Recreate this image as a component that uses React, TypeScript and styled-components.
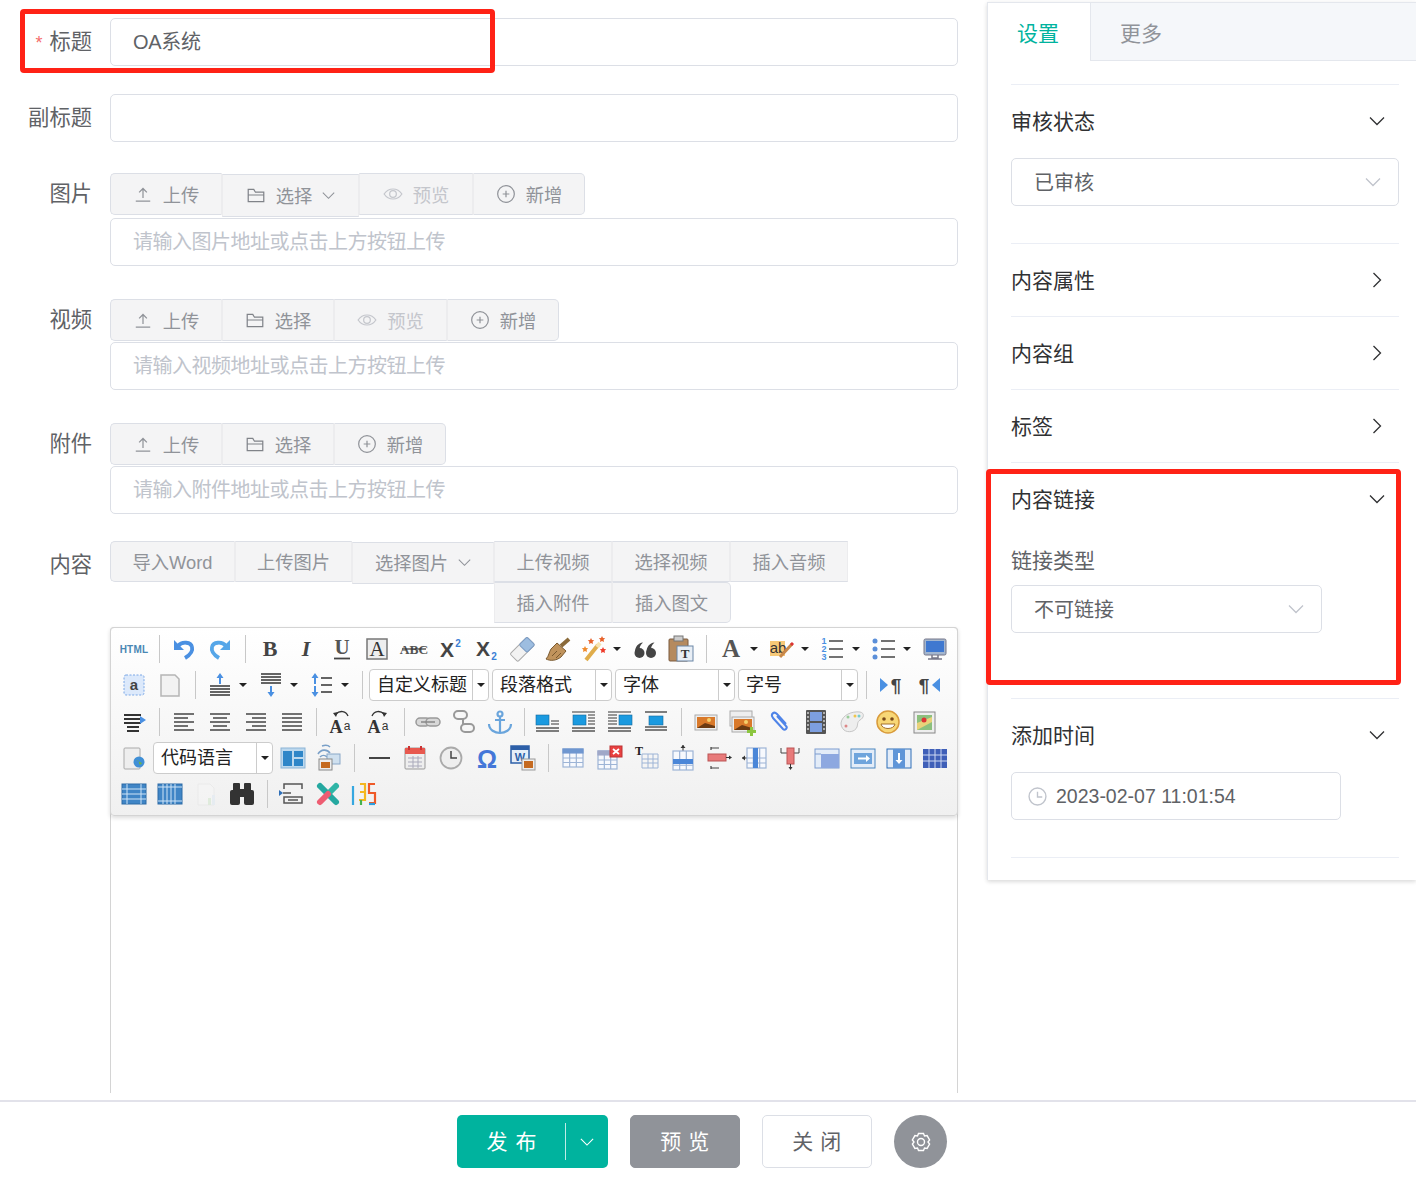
import React from "react";
import styled, { createGlobalStyle } from "styled-components";

const Global = createGlobalStyle`
  html, body { margin: 0; padding: 0; background: #fff; }
  * { box-sizing: border-box; }
  body { font-family: "Liberation Sans", "Noto Sans CJK SC", sans-serif; color: #606266; }
`;

const Page = styled.div`
  position: relative; width: 1416px; height: 1183px; overflow: hidden;
  display: grid; grid-template-rows: 1100px 83px;
`;
const Body = styled.div`display: flex; align-items: flex-start; height: 1100px;`;
const FormCol = styled.div`width: 987px; height: 1093px; overflow: hidden; padding: 18px 29px 0 0; flex: none;`;
const FormRow = styled.div<{ $mb: number }>`
  display: grid; grid-template-columns: 92px 848px; column-gap: 18px; margin-bottom: ${p => p.$mb}px; align-items: start;
`;
const Label = styled.label<{ $lh?: number }>`
  text-align: right; font-size: 21.3px; line-height: ${p => p.$lh ?? 48}px; height: ${p => p.$lh ?? 48}px; color: #606266; white-space: nowrap;
`;
const Star = styled.span`color: #f56c6c; font-size: 18px; line-height: 1; margin-right: 7px;`;
const Input = styled.div<{ $ph?: boolean }>`
  height: 48px; width: 100%; border: 1px solid #dcdfe6; border-radius: 5px; background: #fff;
  padding-left: 22px; font-size: 20px; line-height: 46px;
  color: ${p => (p.$ph ? "#c0c4cc" : "#606266")};
  letter-spacing: ${p => (p.$ph ? "-0.5px" : "-0.3px")};
`;
const BtnGroup = styled.div`display: flex; align-items: flex-start;`;
const Btn = styled.div<{ $w: number; $off?: number; $h?: number; $dim?: boolean; $first?: boolean; $last?: boolean }>`
  width: ${p => p.$w}px; height: ${p => p.$h ?? 42}px; margin-top: ${p => p.$off ?? 0}px;
  background: #f4f4f5; border: 1px solid #dcdfe6; border-left-color: ${p => (p.$first ? "#dcdfe6" : "#ececee")};
  border-right-color: ${p => (p.$last ? "#dcdfe6" : "#ececee")};
  border-radius: ${p => (p.$first ? "5px 0 0 5px" : p.$last ? "0 5px 5px 0" : "0")};
  display: flex; align-items: center; justify-content: center; gap: 10px; padding-bottom: 1px;
  font-size: 18.3px; color: ${p => (p.$dim ? "#c4c6cc" : "#909399")}; white-space: nowrap; flex: none;
`;
const TextBtn = styled(Btn)`gap: 10px; height: ${p => p.$h ?? 41}px; padding-bottom: 2px;`;
const Stack = styled.div`display: flex; flex-direction: column;`;
const Under = styled.div`margin-top: 1px;`;
const ContentBtns = styled.div`display: flex; align-items: flex-start; margin-bottom: 4px; height: 82px;`;
const WrapPart = styled.div`display: flex; flex-wrap: wrap; width: 354px;`;

const Editor = styled.div`
  width: 848px; height: 470px; border: 1px solid #d4d4d4; border-bottom: none; border-radius: 4px 4px 0 0; background: #fff;
`;
const Toolbar = styled.div`
  height: 189px; margin: -1px; padding: 3px 0 0 5px; border: 1px solid #d4d4d4; border-radius: 4px;
  background: linear-gradient(to bottom, #fff, #f0f0f0); box-shadow: 0 2px 4px rgba(0,0,0,.14);
  position: relative;
`;
const ToolRow = styled.div`display: flex; height: 36.25px; align-items: center;`;
const Cell = styled.div<{ $w?: number }>`
  width: ${p => p.$w ?? 36}px; height: 36px; flex: none; display: flex; align-items: center; justify-content: center;
`;
const Sep = styled.div<{ $w?: number }>`
  width: ${p => p.$w ?? 14}px; height: 28px; flex: none; display: flex; justify-content: center;
  &::before { content: ""; width: 1px; height: 28px; background: #c8c8c8; }
`;
const Drop = styled.div`
  width: 15px; height: 36px; flex: none; display: flex; align-items: center;
  &::before { content: ""; margin-left: 1px; border: 4px solid transparent; border-top: 4.5px solid #222; border-bottom: none; }
`;
const Sel = styled.div<{ $ml?: number }>`
  width: 120px; height: 32px; flex: none; margin-left: ${p => p.$ml ?? 0}px; background: #fff;
  border: 1px solid #ccc; border-radius: 4px; display: flex; font-size: 18px; color: #222;
  line-height: 30px; padding-left: 7px; position: relative; white-space: nowrap;
`;
const SelArrow = styled.div`
  position: absolute; right: 0; top: 0; width: 16px; height: 30px; border-left: 1px solid #ccc;
  display: flex; align-items: center; justify-content: center;
  &::before { content: ""; border: 4px solid transparent; border-top: 4.5px solid #222; border-bottom: none; }
`;
const HtmlGlyph = styled.span`font-size: 10px; font-weight: 700; letter-spacing: .2px; color: #4a87b4; font-family: "Liberation Sans", sans-serif;`;

const Panel = styled.aside`
  width: 429px; height: 878px; margin-top: 2px; flex: none; border: 1px solid #e4e7ed; border-right: none; border-bottom: none;
  background: #fff; box-shadow: 0 2px 4px rgba(0,0,0,.12), 0 0 6px rgba(0,0,0,.04);
`;
const Tabs = styled.div`display: flex; height: 58px; background: #f5f7fa; border-bottom: 1px solid #e4e7ed;`;
const Tab = styled.div<{ $on?: boolean }>`
  width: 103px; height: ${p => (p.$on ? 58 : 57)}px; padding-left: 29px; font-size: 21px; line-height: 61px; flex: none;
  color: ${p => (p.$on ? "#00b39e" : "#909399")}; background: ${p => (p.$on ? "#fff" : "transparent")};
  border-right: ${p => (p.$on ? "1px solid #e4e7ed" : "none")};
`;
const PanelBody = styled.div`padding: 23px 17px 0 23px;`;
const CItem = styled.section`border-top: 1px solid #ebeef5;`;
const CLast = styled.div`border-top: 1px solid #ebeef5;`;
const CHead = styled.div<{ $tall?: boolean }>`
  height: ${p => (p.$tall ? 73 : 72)}px; padding-bottom: ${p => (p.$tall ? 1 : 0)}px;
  display: flex; align-items: center; justify-content: space-between; padding-right: 14px;
  font-size: 21px; color: #303133;
`;
const CTitle = styled.span`margin-bottom: 3px;`;
const CContent = styled.div<{ $pb: number }>`padding-bottom: ${p => p.$pb}px;`;
const SubLabel = styled.div`font-size: 21px; line-height: 48px; padding-top: 2px; height: 50px; color: #606266;`;
const SelectBox = styled.div<{ $w: number }>`
  width: ${p => p.$w}px; height: 48px; border: 1px solid #dcdfe6; border-radius: 5px; padding: 0 17px 0 22px;
  display: flex; align-items: center; justify-content: space-between; font-size: 20px; color: #606266;
`;
const SelText = styled.span`margin-bottom: 2px;`;
const DateBox = styled.div`
  width: 330px; height: 48px; border: 1px solid #dcdfe6; border-radius: 5px; padding-left: 16px;
  display: flex; align-items: center; gap: 9px; font-size: 19.5px; color: #606266;
`;

const Footer = styled.footer`
  border-top: 2px solid #e2e2ea; padding: 13px 0 0 457px; display: flex; align-items: flex-start; gap: 22px; background: #fff;
`;
const Publish = styled.div`
  width: 151px; height: 53px; border-radius: 5px; background: #00b39e; color: #fff; font-size: 21px; display: flex; align-items: center; flex: none;
`;
const PubText = styled.div`width: 108px; padding: 0 0 3px 2px; text-align: center; letter-spacing: 1px; white-space: pre;`;
const PubArrow = styled.div`
  flex: 1; height: 37px; border-left: 1px solid rgba(255,255,255,.75); display: flex; align-items: center; justify-content: center;
`;
const FootBtn = styled.div<{ $plain?: boolean }>`
  width: 110px; height: 53px; border-radius: 5px; font-size: 21px; white-space: pre; letter-spacing: .6px; padding-bottom: 3px;
  display: flex; align-items: center; justify-content: center; flex: none;
  background: ${p => (p.$plain ? "#fff" : "#909399")}; color: ${p => (p.$plain ? "#606266" : "#fff")};
  border: 1px solid ${p => (p.$plain ? "#dcdfe6" : "#909399")};
`;
const Round = styled.div`
  width: 53px; height: 53px; border-radius: 50%; background: #909399; display: flex; align-items: center; justify-content: center; flex: none;
`;
const RedBox = styled.div<{ $x: number; $y: number; $w: number; $h: number }>`
  position: absolute; left: ${p => p.$x}px; top: ${p => p.$y}px; width: ${p => p.$w}px; height: ${p => p.$h}px;
  border: 5px solid #ff2216; border-radius: 4px; pointer-events: none;
`;

/* small line icons of the form */
const Stroke = ({ s = 20, c = "#909399", w = 1.1, children }: { s?: number; c?: string; w?: number; children: React.ReactNode }) => (
  <svg width={s} height={s} viewBox="0 0 18 18" fill="none" stroke={c} strokeWidth={w}>{children}</svg>
);
const Upload = () => <Stroke><path d="M2.5 15.5h13M9 12.5V4M5.5 7.5L9 4l3.500 3.500" /></Stroke>;
const Folder = () => <Stroke c="#808389"><path d="M2 15V4h5l1.500 2.500H16V15zM2 9h14" /></Stroke>;
const Eye = () => <Stroke c="#c4c6cc"><path d="M1 9c4-6 12-6 16 0-4 6-12 6-16 0z" /><circle cx="9" cy="9" r="3" /></Stroke>;
const Plus = () => <Stroke><circle cx="9" cy="9" r="7.500" /><path d="M9 6v6M6 9h6" /></Stroke>;
const Chev = ({ dir = "down", c = "#303133", s = 16 }: { dir?: "down" | "right"; c?: string; s?: number }) => (
  <svg width={s} height={s} viewBox="0 0 16 16" fill="none" stroke={c} strokeWidth="1.300">
    {dir === "down" ? <path d="M1 4.500l7 7 7-7" /> : <path d="M4.500 1l7 7-7 7" />}
  </svg>
);
const Clock = () => <Stroke c="#c0c4cc" s={19} w={1.3}><circle cx="9" cy="9" r="8" /><path d="M9 4.500V9.500H13.500" /></Stroke>;
const Gear = () => (
  <svg width="20" height="20" viewBox="0 0 20 20" fill="none" stroke="#fff" strokeWidth="1.400">
    <path d="M7.500 1.500h5l1 2.500 2.600-.4 2.500 4.400L17 10l1.600 2-2.500 4.400-2.600-.4-1 2.500h-5l-1-2.500-2.600.4L1.400 12 3 10 1.400 8l2.500-4.400 2.600.4z" />
    <circle cx="10" cy="10" r="3.500" />
  </svg>
);

/* editor toolbar drawings, on a 26×26 grid */
const BL = "#4a90e2", DK = "#444";
const serif = "Liberation Serif, serif";
const sans = "Liberation Sans, sans-serif";
const L = ({ x1, x2, ys, c = DK, w = 1.5 }: { x1: number; x2: number; ys: number[]; c?: string; w?: number }) => (
  <path d={ys.map(y => `M${x1} ${y}H${x2}`).join("")} stroke={c} strokeWidth={w} fill="none" />
);
const Arrow = ({ x, y, up, c = BL }: { x: number; y: number; up?: boolean; c?: string }) =>
  up ? <path d={`M${x} ${y}l-3.500 5h2.500v6h2v-6h2.500z`} fill={c} /> : <path d={`M${x} ${y}l-3.500-5h2.500v-6h2v6h2.500z`} fill={c} />;
const Tx = ({ x, y, s, f = serif, b = true, i, c = DK, children }: { x: number; y: number; s: number; f?: string; b?: boolean; i?: boolean; c?: string; children: React.ReactNode }) => (
  <text x={x} y={y} fontSize={s} fontFamily={f} fontWeight={b ? 700 : 400} fontStyle={i ? "italic" : "normal"} fill={c} textAnchor="middle">{children}</text>
);
const Undo = ({ c }: { c: string }) => (
  <g><path d="M3 4v10h10z" fill={c} /><path d="M7 10c4-5 13-4 14 1 1 4-2 8-7 11" stroke={c} strokeWidth="3.800" fill="none" /></g>
);
const Grid = ({ x, y, w, h, head = "#6f97d0", line = "#9db4d6" }: { x: number; y: number; w: number; h: number; head?: string; line?: string }) => (
  <g fill="none" stroke={line} strokeWidth="1.200">
    <rect x={x} y={y} width={w} height={h} fill="#f7f9fd" />
    <path d={`M${x} ${y + h * .5}H${x + w}M${x} ${y + h * .75}H${x + w}M${x + w / 3} ${y}V${y + h}M${x + 2 * w / 3} ${y}V${y + h}`} />
    <rect x={x} y={y} width={w} height={h * .22} fill={head} stroke={head} />
  </g>
);
const ImgAlign = ({ v }: { v: number }) => {
  const sq = [[1, 6, 13, 10], [2, 6, 13, 10], [12, 6, 13, 10], [6, 7, 14, 9]][v];
  return (
    <g>
      <rect x={sq[0]} y={sq[1]} width={sq[2]} height={sq[3]} fill="#1a9ae0" stroke="#15689c" strokeWidth=".6" />
      {v === 0 && <L x1={16} x2={24} ys={[12, 15]} c="#777" />}
      {v === 1 && <L x1={17} x2={24} ys={[6, 9, 12, 15]} c="#777" />}
      {v === 2 && <L x1={1} x2={10} ys={[6, 9, 12, 15]} c="#777" />}
      {v === 3 ? <L x1={2} x2={24} ys={[3, 18, 21]} c="#555" /> : <L x1={1} x2={24} ys={[19, 22]} c="#555" />}
      {v !== 3 && <L x1={1} x2={24} ys={[3]} c={v === 0 ? "transparent" : "#777"} />}
    </g>
  );
};
const Sun = () => (
  <g>
    <rect x="2" y="6" width="22" height="15" fill="#eee" stroke="#aaa" />
    <rect x="4" y="8" width="18" height="11" fill="#d9792a" />
    <path d="M4 19l8-5 10 3v2z" fill="#6b3a12" />
    <circle cx="16" cy="11" r="2" fill="#f5cf6b" />
  </g>
);
const Star5 = ({ x, y, c }: { x: number; y: number; c: string }) => (
  <path d={`M${x} ${y - 3}l1 2 2.200.3-1.600 1.500.4 2.200-2-1-2 1 .4-2.200-1.600-1.500 2.200-.3z`} fill={c} />
);

const icons: Record<string, React.ReactNode> = {
  undo: <Undo c="#4a90e2" />,
  redo: <g transform="translate(26 0) scale(-1 1)"><Undo c="#55a6e8" /></g>,
  bold: <Tx x={13} y={20} s={22}>B</Tx>,
  italic: <Tx x={13} y={20} s={22} i>I</Tx>,
  under: <g><Tx x={13} y={18} s={21} c="#555">U</Tx><L x1={5} x2={21} ys={[22.500]} c="#444" w={1.800} /></g>,
  boxA: <g><rect x="2" y="3" width="20" height="20" fill="#eee" stroke="#777" strokeWidth="1.500" /><Tx x={12} y={20} s={21} b={false} c="#333">A</Tx></g>,
  abc: <g><Tx x={13} y={18} s={13.500} c="#555">ABC</Tx><L x1={1} x2={25} ys={[13]} c="#333" w={1.200} /></g>,
  sup: <g><Tx x={10} y={21} s={21} f={sans} c="#444">X</Tx><Tx x={21} y={11} s={10} f={sans} c="#3a7fd5">2</Tx></g>,
  sub: <g><Tx x={10} y={20} s={21} f={sans} c="#444">X</Tx><Tx x={21} y={24} s={10} f={sans} c="#3a7fd5">2</Tx></g>,
  eraser: <g transform="rotate(-45 13 13)"><rect x="1" y="8" width="24" height="11" rx="1.500" fill="#f2f2f2" stroke="#aaa" /><rect x="14" y="8" width="11" height="11" rx="1.500" fill="#9dbde0" stroke="#7c9cc4" /></g>,
  brush: <g><path d="M24 3L16 10" stroke="#8a6a3a" strokeWidth="4" /><path d="M12 7L21 15 16 21C11 25 5 25 1 23 4 20 4 16 6 13z" fill="#c0935c" stroke="#7a5a30" /><path d="M7 20l5-5M11 22l5-5" stroke="#7a5a30" /></g>,
  magic: <g><path d="M5 24L17 9" stroke="#e0ad4b" strokeWidth="4" /><path d="M16 11l3-4" stroke="#f6e3b0" strokeWidth="4" /><Star5 x={10} y={5} c="#e8622a" /><Star5 x={21} y={3} c="#e8622a" /><Star5 x={4} y={13} c="#f08a2c" /><Star5 x={22} y={14} c="#ee3b2b" /></g>,
  quote: <g fill="#444"><circle cx="7.500" cy="17" r="5" /><path d="M3 16C3 11 6 7 11 6.500 8 9 7 12 8 14z" /><circle cx="19" cy="17" r="5" /><path d="M14.500 16C14.500 11 17.500 7 22.500 6.500 19.500 9 18.500 12 19.500 14z" /></g>,
  paste: <g><rect x="1" y="3" width="19" height="22" rx="1" fill="#b58a5e" stroke="#7a5a3e" /><rect x="6" y="0" width="9" height="5" fill="#ccc" stroke="#777" /><rect x="9" y="10" width="16" height="15" fill="#e8eef5" stroke="#6a86a6" /><Tx x={17} y={22} s={13} c="#333">T</Tx></g>,
  fontA: <Tx x={13} y={21} s={25} c="#555">A</Tx>,
  hilite: <g><rect x="1" y="5" width="15" height="15" fill="#f7c978" /><Tx x={9} y={17} s={15} f={sans} b={false} c="#333">ab</Tx><path d="M11 21L23 8" stroke="#c8884a" strokeWidth="3" /><path d="M22 9l2-2" stroke="#d33" strokeWidth="3" /></g>,
  ol: <g><Tx x={4} y={8} s={9} f={sans} c={BL}>1</Tx><Tx x={4} y={16} s={9} f={sans} c={BL}>2</Tx><Tx x={4} y={24} s={9} f={sans} c={BL}>3</Tx><L x1={9} x2={23} ys={[5, 13, 21]} w={1.600} /></g>,
  ul: <g fill="#5b8fd9"><circle cx="4" cy="5" r="2.500" /><circle cx="4" cy="13" r="2.500" /><circle cx="4" cy="21" r="2.500" /><L x1={10} x2={24} ys={[5, 13, 21]} w={1.600} /></g>,
  monitor: <g><rect x="2" y="3" width="22" height="16" rx="1.500" fill="#a3b6cf" stroke="#778" /><rect x="4" y="5" width="18" height="11" fill="#3f78d0" /><path d="M10 19v3h6v-3M6 23h14" stroke="#778" strokeWidth="1.500" fill="none" /></g>,
  aBox: <g><rect x="3" y="3" width="20" height="20" rx="2" fill="#dce9fb" stroke="#7aa7e6" strokeDasharray="2 1.500" /><Tx x={13} y={18} s={15} f={sans} c="#444">a</Tx></g>,
  pageDoc: <path d="M4 3h14l4 4v17H4z" fill="#f2f2f2" stroke="#b5b5b5" strokeWidth="1.500" />,
  spTop: <g><Arrow x={13} y={1} up /><L x1={3} x2={23} ys={[14, 17, 20, 23]} c="#333" w={1.700} /></g>,
  spBot: <g><L x1={3} x2={23} ys={[2, 5, 8, 11]} c="#333" w={1.700} /><Arrow x={13} y={25} /></g>,
  lineH: <g><Arrow x={6} y={1} up /><Arrow x={6} y={25} /><L x1={12} x2={23} ys={[6, 13, 20]} c="#333" w={1.700} /></g>,
  indent: <g><L x1={3} x2={20} ys={[6, 10, 14]} c="#333" w={1.800} /><L x1={6} x2={18} ys={[18, 22]} c="#333" w={1.800} /><path d="M19 7l6 4-6 4z" fill={BL} /></g>,
  left: <g><L x1={3} x2={23} ys={[5, 13, 21]} /><L x1={3} x2={17} ys={[9, 17]} /></g>,
  center: <g><L x1={3} x2={23} ys={[5, 13, 21]} /><L x1={6} x2={20} ys={[9, 17]} /></g>,
  right: <g><L x1={3} x2={23} ys={[5, 13, 21]} /><L x1={9} x2={23} ys={[9, 17]} /></g>,
  justify: <L x1={3} x2={23} ys={[5, 9, 13, 17, 21]} />,
  aaL: <g><Tx x={9} y={24} s={18} c="#333">A</Tx><Tx x={20} y={21} s={12} f={sans} b={false} c="#333">a</Tx><path d="M9 5c4-4 10-3 12 2" stroke="#333" strokeWidth="1.300" fill="none" /><path d="M6 4l5-1-2 5z" fill="#333" /></g>,
  aaR: <g><Tx x={9} y={24} s={18} c="#333">A</Tx><Tx x={20} y={21} s={12} f={sans} b={false} c="#333">a</Tx><path d="M7 7c2-5 8-6 12-2" stroke="#333" strokeWidth="1.300" fill="none" /><path d="M22 4l-5-1 2 5z" fill="#333" /></g>,
  link: <g fill="#d8d8d8" stroke="#999" strokeWidth="1.500"><rect x="1" y="9" width="14" height="8" rx="4" /><rect x="11" y="9" width="14" height="8" rx="4" /><path d="M6 13h14" stroke="#888" /></g>,
  unlink: <g fill="none" stroke="#999" strokeWidth="2"><rect x="3" y="2" width="13" height="8" rx="4" /><rect x="10" y="15" width="13" height="8" rx="4" /><path d="M12 10v5" /></g>,
  anchor: <g fill="none" stroke="#6aa5dc" strokeWidth="2.200"><circle cx="13" cy="5" r="2.500" /><path d="M13 8v16M8 11h10M2 15c0 6 6 9 11 9s11-3 11-9" /></g>,
  img0: <ImgAlign v={0} />, img1: <ImgAlign v={1} />, img2: <ImgAlign v={2} />, img3: <ImgAlign v={3} />,
  photo: <Sun />,
  photos: <g><rect x="1" y="2" width="22" height="15" fill="#eee" stroke="#aaa" /><g transform="translate(1 2)"><Sun /></g><path d="M21 18h3v3h3v3h-3v3h-3v-3h-3v-3h3z" fill="#8cc63f" /></g>,
  clip: <path d="M20 15L11 5C8 2 4 5 7 9l10 11c2 2 5-1 3-3L11 7" stroke="#4f84e8" strokeWidth="2" fill="none" />,
  film: <g><rect x="3" y="1" width="20" height="24" fill="#555" rx="1" /><rect x="7" y="3" width="12" height="9" fill="#7d9fe0" /><rect x="7" y="14" width="12" height="9" fill="#7d9fe0" /><path d="M5 3v20M21 3v20" stroke="#ccc" strokeWidth="1.500" strokeDasharray="2 2" /></g>,
  palette: <g><path d="M2 14C3 6 13 2 21 3c5 1 4 6 0 8-3 2-2 4-3 7-2 5-9 6-13 3-2-2-3-4-3-7z" fill="#eee" stroke="#c5c5c5" /><circle cx="16" cy="7" r="1.500" fill="#f0c64a" /><circle cx="20" cy="7" r="1.500" fill="#7cc" /><circle cx="9" cy="8" r="1.500" fill="#9c9" /><circle cx="7" cy="17" r="1.500" fill="#d88" /></g>,
  smile: <g><circle cx="13" cy="13" r="11" fill="#f8d776" stroke="#d99b3c" strokeWidth="1.500" /><circle cx="9" cy="10" r="1.800" fill="#7a4a1a" /><circle cx="17" cy="10" r="1.800" fill="#7a4a1a" /><path d="M6 15h14c-1 6-13 6-14 0z" fill="#fff" stroke="#a5702a" /></g>,
  map: <g><rect x="3" y="3" width="21" height="21" fill="#eee" stroke="#888" /><rect x="6" y="6" width="15" height="15" fill="#8cc07e" /><path d="M6 14l15-6v5l-15 8z" fill="#e8d27a" /><circle cx="13" cy="11" r="2.500" fill="#d33" /></g>,
  globeDoc: <g><rect x="3" y="3" width="16" height="21" rx="1" fill="#eee" stroke="#aaa" /><circle cx="18" cy="17" r="5.500" fill="#3f8fd6" /><path d="M15 15c2 0 3 1 3 3s2 2 3 0" fill="#6bb04a" /></g>,
  layout: <g><rect x="1" y="3" width="24" height="20" fill="#bcd8ee" stroke="#8bb4d6" /><rect x="3" y="6" width="9" height="15" fill="#2f86c8" /><rect x="14" y="6" width="9" height="6" fill="#2f86c8" /><rect x="14" y="14" width="9" height="7" fill="#2f86c8" /></g>,
  wifi: <g><path d="M2 9c3-5 9-5 12-1M4 12c2-2 5-2 7 0M6 1c3-1 6-1 8 1" stroke="#7aa0c8" strokeWidth="1.600" fill="none" /><rect x="11" y="9" width="13" height="10" fill="#cfe0ef" stroke="#8aa8c8" /><rect x="3" y="14" width="13" height="11" fill="#eee" stroke="#888" /><rect x="5" y="17" width="9" height="6" fill="#c56a20" /></g>,
  hr: <L x1={3} x2={24} ys={[13]} c="#444" w={2} />,
  cal: <g><rect x="3" y="3" width="20" height="21" rx="1" fill="#eee" stroke="#999" /><rect x="3" y="3" width="20" height="6" fill="#e8594f" /><path d="M7 1v4M19 1v4" stroke="#c33" strokeWidth="2" /><path d="M6 13h14M6 17h14M6 21h14M11 11v12M16 11v12" stroke="#aab" /></g>,
  clock: <g><circle cx="13" cy="13" r="10.500" fill="#eee" stroke="#aaa" strokeWidth="1.800" /><path d="M13 6v7h6" stroke="#444" strokeWidth="1.500" fill="none" /></g>,
  omega: <Tx x={13} y={23} s={25} f={sans} b c="#4477d8">Ω</Tx>,
  word: <g><rect x="1" y="1" width="18" height="17" fill="#e6eef8" stroke="#2d5fa8" strokeWidth="1.500" /><rect x="1" y="1" width="18" height="4" fill="#2d5fa8" /><Tx x={10} y={16} s={11} f={sans} c="#2d5fa8">W</Tx><rect x="12" y="14" width="13" height="11" fill="#eee" stroke="#999" /><rect x="14" y="16" width="9" height="7" fill="#c56a20" /></g>,
  tbl: <Grid x={3} y={4} w={20} h={18} />,
  tblDel: <g><Grid x={1} y={6} w={19} h={18} head="#a0a8c8" /><rect x="13" y="1" width="12" height="11" fill="#e94040" stroke="#b33" /><path d="M16 4l6 5M22 4l-6 5" stroke="#fff" strokeWidth="1.800" /></g>,
  tblT: <g><Tx x={5} y={10} s={12} c="#222">T</Tx><path d="M8 9h16v14H8zM8 14h16M8 18h16M14 9v14M19 9v14" stroke="#9db4d6" fill="none" /></g>,
  rowIns: <g><path d="M13 0v7" stroke="#333" /><path d="M10.500 3L13 0l2.500 3z" fill="#333" /><Grid x={3} y={6} w={20} h={19} head="transparent" /><rect x="3" y="14" width="20" height="5" fill="#4a86d8" /></g>,
  rowDel: <g><path d="M5 5v-3M5 21v3M5 3h8M5 23h8" stroke="#444" strokeWidth="1.200" fill="none" /><rect x="2" y="9" width="18" height="7" fill="#e87a7a" stroke="#b55" /><path d="M20 12.500h5" stroke="#333" /><path d="M23 10.500l3 2-3 2z" fill="#333" /></g>,
  colIns: <g><path d="M0 13h7" stroke="#333" /><path d="M3 10.500L0 13l3 2.500z" fill="#333" /><Grid x={5} y={3} w={19} h={20} head="transparent" /><rect x="11" y="3" width="5" height="20" fill="#4a86d8" /></g>,
  colDel: <g><path d="M3 8V3M21 8V3" stroke="#444" fill="none" /><path d="M3 8h6M21 8h-6" stroke="#444" /><rect x="9" y="3" width="7" height="16" fill="#e87a7a" stroke="#b55" /><path d="M12.500 19v5" stroke="#333" /><path d="M10.500 22l2 3 2-3z" fill="#333" /></g>,
  merge: <g><rect x="1" y="4" width="24" height="19" fill="#e3ecf8" stroke="#7c9ccf" /><rect x="7" y="9" width="18" height="14" fill="#8da8e0" /><path d="M1 9h6" stroke="#7c9ccf" /></g>,
  mergeR: <g><rect x="1" y="4" width="24" height="19" fill="#e3ecf8" stroke="#4a86c0" /><rect x="4" y="8" width="18" height="11" fill="#6fa4dc" /><path d="M8 13.500h9" stroke="#fff" strokeWidth="2" /><path d="M16 10l4 3.500-4 3.500z" fill="#fff" /></g>,
  mergeD: <g><rect x="1" y="4" width="24" height="19" fill="#e3ecf8" stroke="#2f6fb8" /><rect x="7" y="4" width="12" height="19" fill="#5f95d8" /><path d="M13 8v8" stroke="#fff" strokeWidth="2" /><path d="M9.500 15l3.500 4 3.500-4z" fill="#fff" /></g>,
  split: <g><rect x="1" y="4" width="24" height="19" fill="#3f5fb8" /><path d="M1 10h24M1 16h24M7 4v19M13 4v19M19 4v19" stroke="#cdd8f2" /></g>,
  rows: <g><rect x="1" y="3" width="24" height="20" fill="#3f85c6" stroke="#2d6aa5" /><path d="M1 8h24M1 13h24M1 18h24M6 3v20M20 3v20" stroke="#cfe4f7" /></g>,
  cols: <g><rect x="1" y="3" width="24" height="20" fill="#3f85c6" stroke="#2d6aa5" /><path d="M1 6h24M1 20h24M6 3v20M10 3v20M14 3v20M18 3v20" stroke="#cfe4f7" /></g>,
  blank: <g opacity=".5"><path d="M5 3h12l4 4v17H5z" fill="#f6f6f6" stroke="#e4e4e4" /><rect x="15" y="17" width="3" height="7" fill="#cfe6c8" /><rect x="19" y="14" width="3" height="10" fill="#dde8f2" /></g>,
  binoc: <g fill="#333"><rect x="4" y="2" width="7" height="8" rx="1" /><rect x="15" y="2" width="7" height="8" rx="1" /><rect x="1" y="9" width="10" height="15" rx="2" /><rect x="15" y="9" width="10" height="15" rx="2" /><rect x="10" y="8" width="6" height="8" /></g>,
  pageBreak: <g><path d="M5 8V3h18v5M5 22v-6h18v6H5z" stroke="#555" strokeWidth="1.500" fill="none" /><path d="M4 12H12" stroke="#555" strokeWidth="1.500" /><path d="M0 9l4 3-4 3z" fill="#2f6fb8" /><L x1={9} x2={19} ys={[19]} c="#555" /></g>,
  xIcon: <g strokeWidth="6" strokeLinecap="round" fill="none"><path d="M5 5L21 21" stroke="#25a8a0" /><path d="M21 5L13 13" stroke="#2fb5a6" /><path d="M13 13L5 21" stroke="#ee5d72" /></g>,
  jsIcon: <g fill="none" strokeWidth="2.200"><path d="M2 5v19" stroke="#35a7e0" /><path d="M9 3h5v8H9M14 11v8H8" stroke="#f4b71e" /><path d="M10 19v5" stroke="#47b14c" /><path d="M24 3h-6v9h6v10h-6" stroke="#ef5a28" /><path d="M18 23h6" stroke="#2d9ee0" /></g>,
};

const Ico = ({ n, size = 26 }: { n: string; size?: number }) => (
  <svg width={size} height={size} viewBox="0 0 26 26" style={{ overflow: "visible" }}>{icons[n]}</svg>
);
const Pilcrow = ({ flip }: { flip?: boolean }) => (
  <svg width="26" height="26" viewBox="0 0 26 26" style={{ overflow: "visible" }}>
    {flip ? <path d="M25 6v14l-8-7z" fill={BL} /> : <path d="M1 6v14l8-7z" fill={BL} />}
    <Tx x={flip ? 9 : 17} y={20} s={19} f={sans} c="#444">¶</Tx>
  </svg>
);

type Tok = string | [string, number] | { sep: number } | { sel: string; ml?: number };
const rows: Tok[][] = [
  ["html", { sep: 14 }, "undo", "redo", { sep: 14 }, "bold", "italic", "under", "boxA", "abc", "sup", "sub", "eraser", "brush", "magic", "drop", "quote", "paste", { sep: 14 }, "fontA", "drop", "hilite", "drop", "ol", "drop", "ul", "drop", "monitor"],
  ["aBox", "pageDoc", { sep: 14 }, "spTop", "drop", "spBot", "drop", "lineH", "drop", { sep: 14 }, { sel: "自定义标题" }, { sel: "段落格式", ml: 3 }, { sel: "字体", ml: 3 }, { sel: "字号", ml: 3 }, { sep: 16 }, "pilL", "pilR"],
  ["indent", { sep: 14 }, "left", "center", "right", "justify", { sep: 12 }, "aaL", ["aaR", 40], { sep: 12 }, "link", "unlink", "anchor", { sep: 12 }, "img0", "img1", "img2", "img3", { sep: 14 }, "photo", "photos", ["clip", 38], "film", "palette", "smile", "map"],
  ["globeDoc", { sel: "代码语言", ml: 1 }, ["__gap", 2], "layout", "wifi", { sep: 14 }, "hr", "cal", "clock", "omega", "word", { sep: 14 }, "tbl", ["tblDel", 38], "tblT", "rowIns", "rowDel", "colIns", "colDel", "merge", "mergeR", "mergeD", "split"],
  ["rows", "cols", "blank", "binoc", { sep: 14 }, "pageBreak", "xIcon", "jsIcon"],
];

const renderTok = (t: Tok, i: number) => {
  if (typeof t === "object" && !Array.isArray(t)) {
    if ("sep" in t) return <Sep key={i} $w={t.sep} />;
    return <Sel key={i} $ml={t.ml}>{t.sel}<SelArrow /></Sel>;
  }
  const [name, w] = Array.isArray(t) ? t : [t, 36];
  if (name === "drop") return <Drop key={i} />;
  if (name === "__gap") return <Cell key={i} $w={w} />;
  if (name === "html") return <Cell key={i} $w={w}><HtmlGlyph>HTML</HtmlGlyph></Cell>;
  if (name === "pilL") return <Cell key={i} $w={w}><Pilcrow /></Cell>;
  if (name === "pilR") return <Cell key={i} $w={w}><Pilcrow flip /></Cell>;
  return <Cell key={i} $w={w}><Ico n={name} /></Cell>;
};

const Media = ({ label, ph, pick, preview, mb }: { label: string; ph: string; pick?: boolean; preview: number; mb: number }) => (
  <FormRow $mb={mb}>
    <Label $lh={42}>{label}</Label>
    <Stack>
      <BtnGroup>
        <Btn $w={112} $first><Upload />上传</Btn>
        {pick
          ? <Btn $w={137} $off={1} $h={43}><Folder />选择<Chev s={13} c="#909399" /></Btn>
          : <Btn $w={112}><Folder />选择</Btn>}
        {preview > 0 && <Btn $w={preview} $dim><Eye />预览</Btn>}
        <Btn $w={112} $last><Plus />新增</Btn>
      </BtnGroup>
      <Under><Input $ph>{ph}</Input></Under>
    </Stack>
  </FormRow>
);

export default function App() {
  return (
    <Page>
      <Global />
      <Body>
        <FormCol>
          <FormRow $mb={28}>
            <Label><Star>*</Star>标题</Label>
            <Input>OA系统</Input>
          </FormRow>
          <FormRow $mb={31}>
            <Label>副标题</Label>
            <Input />
          </FormRow>
          <Media label="图片" ph="请输入图片地址或点击上方按钮上传" pick preview={114} mb={33} />
          <Media label="视频" ph="请输入视频地址或点击上方按钮上传" preview={113} mb={33} />
          <Media label="附件" ph="请输入附件地址或点击上方按钮上传" preview={0} mb={27} />
          <FormRow $mb={0}>
            <Label $lh={48}>内容</Label>
            <Stack>
              <ContentBtns>
                <TextBtn $w={125} $first>导入Word</TextBtn>
                <TextBtn $w={117}>上传图片</TextBtn>
                <TextBtn $w={142} $off={1} $h={42}>选择图片<Chev s={13} c="#909399" /></TextBtn>
                <WrapPart>
                  <TextBtn $w={118}>上传视频</TextBtn>
                  <TextBtn $w={118}>选择视频</TextBtn>
                  <TextBtn $w={118}>插入音频</TextBtn>
                  <TextBtn $w={118}>插入附件</TextBtn>
                  <TextBtn $w={119} $last>插入图文</TextBtn>
                </WrapPart>
              </ContentBtns>
              <Editor>
                <Toolbar>
                  {rows.map((r, i) => <ToolRow key={i}>{r.map(renderTok)}</ToolRow>)}
                </Toolbar>
              </Editor>
            </Stack>
          </FormRow>
        </FormCol>
        <Panel>
          <Tabs>
            <Tab $on>设置</Tab>
            <Tab>更多</Tab>
          </Tabs>
          <PanelBody>
            <CItem>
              <CHead $tall><CTitle>审核状态</CTitle><Chev /></CHead>
              <CContent $pb={37}>
                <SelectBox $w={388}><SelText>已审核</SelText><Chev c="#c0c4cc" /></SelectBox>
              </CContent>
            </CItem>
            <CItem><CHead><CTitle>内容属性</CTitle><Chev dir="right" /></CHead></CItem>
            <CItem><CHead><CTitle>内容组</CTitle><Chev dir="right" /></CHead></CItem>
            <CItem><CHead><CTitle>标签</CTitle><Chev dir="right" /></CHead></CItem>
            <CItem>
              <CHead><CTitle>内容链接</CTitle><Chev /></CHead>
              <CContent $pb={65}>
                <SubLabel>链接类型</SubLabel>
                <SelectBox $w={311}><SelText>不可链接</SelText><Chev c="#c0c4cc" /></SelectBox>
              </CContent>
            </CItem>
            <CItem>
              <CHead $tall><CTitle>添加时间</CTitle><Chev /></CHead>
              <CContent $pb={37}>
                <DateBox><Clock />2023-02-07 11:01:54</DateBox>
              </CContent>
            </CItem>
            <CLast />
          </PanelBody>
        </Panel>
      </Body>
      <Footer>
        <Publish>
          <PubText>发 布</PubText>
          <PubArrow><Chev s={14} c="#fff" /></PubArrow>
        </Publish>
        <FootBtn>预 览</FootBtn>
        <FootBtn $plain>关 闭</FootBtn>
        <Round><Gear /></Round>
      </Footer>
      <RedBox $x={20} $y={9} $w={475} $h={64} />
      <RedBox $x={986} $y={469} $w={415} $h={216} />
    </Page>
  );
}
